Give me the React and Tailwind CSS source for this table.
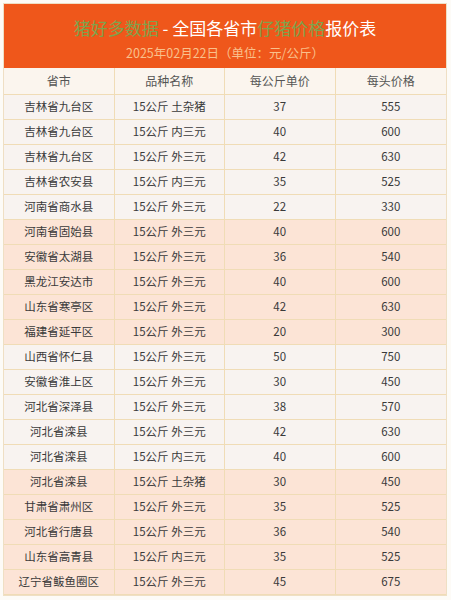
import React from 'react';

const rows = [
  ['吉林省九台区', '15公斤 土杂猪', '37', '555'],
  ['吉林省九台区', '15公斤 内三元', '40', '600'],
  ['吉林省九台区', '15公斤 外三元', '42', '630'],
  ['吉林省农安县', '15公斤 内三元', '35', '525'],
  ['河南省商水县', '15公斤 外三元', '22', '330'],
  ['河南省固始县', '15公斤 外三元', '40', '600'],
  ['安徽省太湖县', '15公斤 外三元', '36', '540'],
  ['黑龙江安达市', '15公斤 外三元', '40', '600'],
  ['山东省寒亭区', '15公斤 外三元', '42', '630'],
  ['福建省延平区', '15公斤 外三元', '20', '300'],
  ['山西省怀仁县', '15公斤 外三元', '50', '750'],
  ['安徽省淮上区', '15公斤 外三元', '30', '450'],
  ['河北省深泽县', '15公斤 外三元', '38', '570'],
  ['河北省滦县', '15公斤 外三元', '42', '630'],
  ['河北省滦县', '15公斤 内三元', '40', '600'],
  ['河北省滦县', '15公斤 土杂猪', '30', '450'],
  ['甘肃省肃州区', '15公斤 外三元', '35', '525'],
  ['河北省行唐县', '15公斤 外三元', '36', '540'],
  ['山东省高青县', '15公斤 内三元', '35', '525'],
  ['辽宁省鲅鱼圈区', '15公斤 外三元', '45', '675'],
];

const font = { fontFamily: '"Noto Sans CJK SC", "Noto Sans", sans-serif' };

export default function App() {
  return (
    <div className="w-[451px] h-[600px] bg-[#fdfbf7] pt-[3px] px-[3px]" style={font}>
      <div className="w-[444px] border border-[#efdfc4] bg-[#f7f2ee]">
        <div className="h-[64px] bg-[#ef571b] flex flex-col items-center">
          <div className="mt-[12px] text-[17px] leading-[24px] text-white">
            <span className="text-[#7fa24c]">猪好多数据</span>
            <span> - 全国各省市</span>
            <span className="text-[#7fa24c]">仔猪价格</span>
            <span>报价表</span>
          </div>
          <div className="mt-[5px] text-[12.5px] leading-[16px] text-[#f9c08c]">
            2025年02月22日（单位：元/公斤）
          </div>
        </div>
        <div className="grid grid-cols-4 h-[27px] bg-[#fbf5ee] border-b border-[#f0dcb6] text-[12px] text-[#555]">
          {['省市', '品种名称', '每公斤单价', '每头价格'].map((h, i) => (
            <div
              key={h}
              className={`flex items-center justify-center ${i < 3 ? 'border-r border-[#f0dcb6]' : ''}`}
            >
              {h}
            </div>
          ))}
        </div>
        {rows.map((r, idx) => {
          const peach = Math.floor(idx / 5) % 2 === 1;
          return (
            <div
              key={idx}
              className={`grid grid-cols-4 h-[25px] border-b border-[#f0dcb6] text-[11.5px] text-[#3a3a3a] ${
                peach ? 'bg-[#fce4d6]' : 'bg-[#f8f3f0]'
              }`}
            >
              {r.map((c, i) => (
                <div
                  key={i}
                  className={`flex items-center justify-center ${i < 3 ? 'border-r border-[#f0dcb6]' : ''}`}
                >
                  {c}
                </div>
              ))}
            </div>
          );
        })}
      </div>
    </div>
  );
}
